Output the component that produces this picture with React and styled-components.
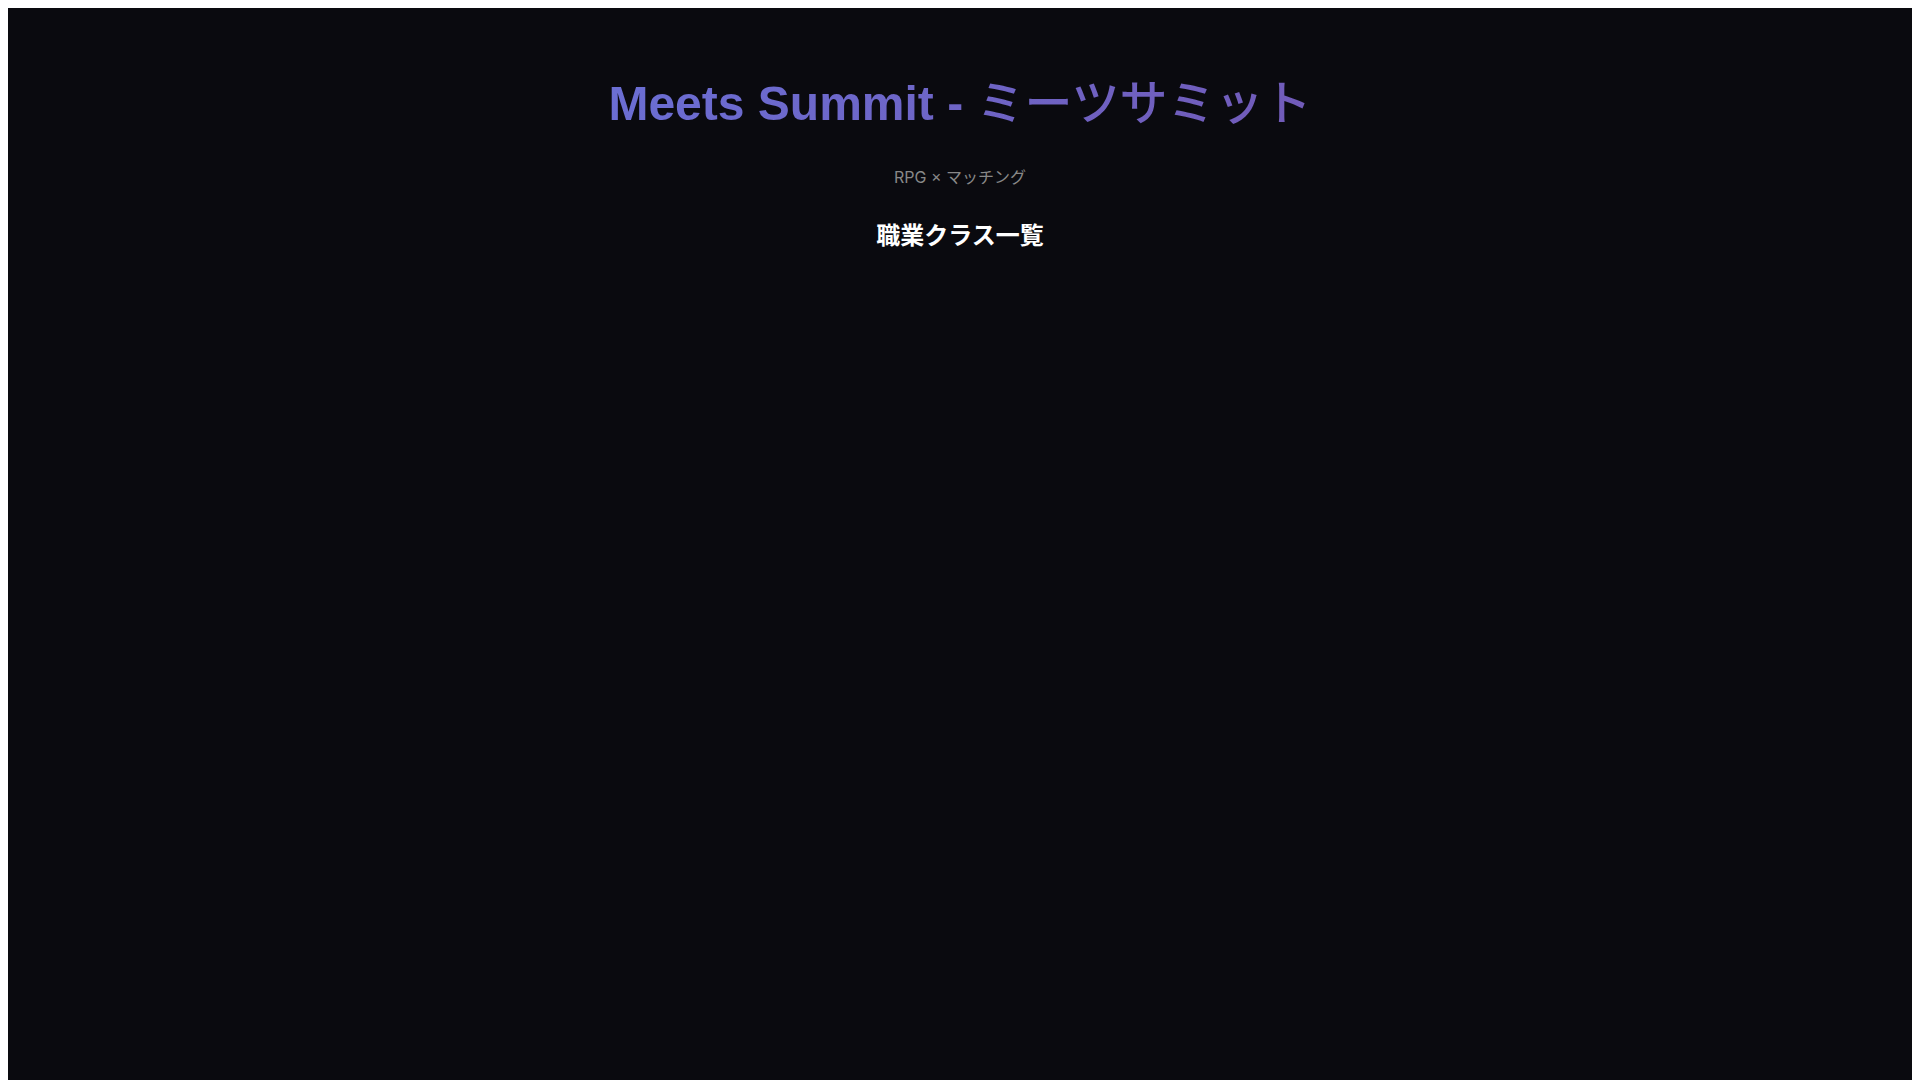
import styled, { createGlobalStyle } from "styled-components";

const GlobalStyle = createGlobalStyle`
    body {
        font-family: Inter, "Noto Sans CJK JP", sans-serif;
    }
`;

const Page = styled.div`
    min-height: 100vh;
    background: #0a0a0f;
    color: #ffffff;
    padding: 24px 2rem;
    text-align: center;
`;

const Title = styled.h1`
    margin: 32px 0 30px;
    font-family: "Liberation Sans", "Noto Sans CJK JP", sans-serif;
    font-size: 48px;
    font-weight: bold;
    background: linear-gradient(135deg, #667eea 0%, #764ba2 100%);
    -webkit-background-clip: text;
    background-clip: text;
    -webkit-text-fill-color: transparent;
`;

const TitleJa = styled.span`
    font-weight: 500;
`;

const Subtitle = styled.p`
    margin: 0 0 28px;
    color: #888888;
    font-size: 16px;
`;

const SectionTitle = styled.h2`
    margin: 0 0 20px;
    font-size: 24px;
    font-weight: bold;
`;

const ClassGrid = styled.div`
    display: grid;
    grid-template-columns: repeat(auto-fill, minmax(280px, 1fr));
    gap: 1.5rem;
`;

export default function App() {
    const classes = [];

    return (
        <>
            <GlobalStyle />
            <Page>
                <Title>Meets Summit - <TitleJa>ミーツサミット</TitleJa></Title>
                <Subtitle>RPG × マッチング</Subtitle>
                <SectionTitle>職業クラス一覧</SectionTitle>
                <ClassGrid>
                    {classes.map(el => (<div key={el}>{el}</div>))}
                </ClassGrid>
            </Page>
        </>
    );
}
